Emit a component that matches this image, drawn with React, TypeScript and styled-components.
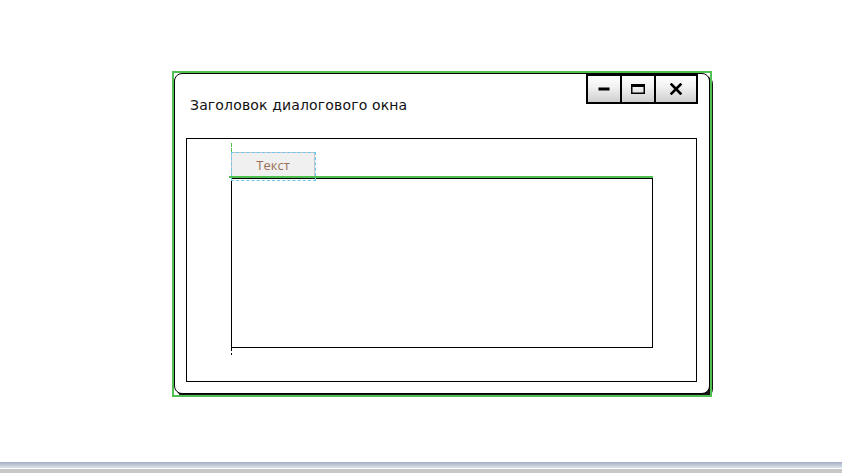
import React from "react";
import styled, { createGlobalStyle } from "styled-components";

const Global = createGlobalStyle`
  html, body { margin: 0; padding: 0; background: #fff; overflow: hidden; }
  * { box-sizing: border-box; }
`;

const Page = styled.div`
  width: 842px;
  height: 473px;
  display: flex;
  flex-direction: column;
  font-family: "DejaVu Sans", "Liberation Sans", sans-serif;
`;

const Canvas = styled.div`
  height: 462px;
  padding: 73px 0 0 174px;
`;

const Dialog = styled.div`
  position: relative;
  width: 536px;
  height: 321px;
  border: 1px solid #000;
  border-radius: 8px;
  background: #fff;
  box-shadow: 3px 3px 0 #151515;
  display: flex;
  flex-direction: column;
`;

const Selection = styled.div`
  position: absolute;
  left: -3px;
  top: -3px;
  width: 540px;
  height: 326px;
  border: 2px solid #4fbf4f;
  pointer-events: none;
`;

const Header = styled.div`
  height: 64px;
  display: flex;
  justify-content: space-between;
  align-items: flex-start;
  padding-right: 11px;
`;

const Title = styled.div`
  padding: 22px 0 0 15px;
  font-size: 14px;
  letter-spacing: 0.15px;
  line-height: 18px;
  color: #111;
`;

const ButtonGroup = styled.div`
  display: flex;
  border: 2px solid #000;
  height: 30px;
`;

const WinButton = styled.div<{ $w: number; $first?: boolean }>`
  width: ${(p) => p.$w + (p.$first ? 0 : 2)}px;
  height: 100%;
  border-left: ${(p) => (p.$first ? "none" : "2px solid #000")};
  background: linear-gradient(to bottom, #ffffff 0%, #f2f2f2 40%, #cfcfcf 100%);
  display: flex;
  align-items: center;
  justify-content: center;
`;

const Frame = styled.div`
  position: relative;
  margin: 0 12px 11px 11px;
  flex: 1;
  border: 1px solid #000;
  padding: 13px 0 0 44px;
`;

const GuideLine = styled.div`
  position: absolute;
  left: 44px;
  top: 4px;
  width: 1px;
  height: 212px;
  background: repeating-linear-gradient(to bottom, #000 0 3px, transparent 3px 5px);
`;

const GuideGreen = styled.div`
  position: absolute;
  left: 44px;
  top: 4px;
  width: 1px;
  height: 9px;
  background: repeating-linear-gradient(to bottom, #4fbf4f 0 4px, transparent 4px 5px);
`;

const TabStrip = styled.div`
  position: relative;
  display: flex;
  flex-direction: column;
`;

const Tab = styled.div`
  width: 84px;
  height: 24px;
  background: #f0f0f0;
  border: 1px solid #c6c6c6;
  border-bottom: none;
  display: flex;
  align-items: center;
  justify-content: center;
  font-size: 13px;
  color: #9a7055;
  font-family: "Open Sans", "DejaVu Sans", sans-serif;
`;

const TabLine = styled.div`
  margin-left: -2px;
  width: 424px;
  height: 2px;
  background: #4fbf4f;
`;

const TabSelection = styled.div`
  position: absolute;
  left: 0;
  top: 0;
  width: 85px;
  height: 29px;
  border: 1px dashed #6cc6ee;
  pointer-events: none;
`;

const Panel = styled.div`
  width: 422px;
  height: 170px;
  border: 1px solid #000;
  background: #fff;
`;

const BottomBar = styled.div`
  height: 11px;
  display: flex;
  flex-direction: column;
`;

const BarGradient = styled.div`
  height: 6px;
  background: linear-gradient(to bottom, #a4afc4, #dde2eb);
`;

const BarGap = styled.div`
  height: 1px;
  background: #fff;
`;

const BarGray = styled.div`
  flex: 1;
  background: #c8c8c8;
`;

export default function App() {
  return (
    <Page>
      <Global />
      <Canvas>
        <Dialog>
          <Header>
            <Title>Заголовок диалогового окна</Title>
            <ButtonGroup>
              <WinButton $w={32} $first>
                <svg width="12" height="4" viewBox="0 0 12 4">
                  <rect x="0.5" y="0.5" width="11" height="3" fill="#000" />
                </svg>
              </WinButton>
              <WinButton $w={32}>
                <svg width="14" height="10" viewBox="0 0 14 10">
                  <rect x="0.75" y="0.75" width="12.5" height="8.5" fill="none" stroke="#000" strokeWidth="1.5" />
                  <rect x="0" y="0" width="14" height="3" fill="#000" />
                </svg>
              </WinButton>
              <WinButton $w={40}>
                <svg width="12" height="12" viewBox="0 0 12 12">
                  <path d="M1.5 1.5 L10.5 10.5 M10.5 1.5 L1.5 10.5" stroke="#000" strokeWidth="2.6" strokeLinecap="square" />
                </svg>
              </WinButton>
            </ButtonGroup>
          </Header>
          <Frame>
            <GuideLine />
            <GuideGreen />
            <TabStrip>
              <Tab>Текст</Tab>
              <TabLine />
              <TabSelection />
            </TabStrip>
            <Panel />
          </Frame>
          <Selection />
        </Dialog>
      </Canvas>
      <BottomBar>
        <BarGradient />
        <BarGap />
        <BarGray />
      </BottomBar>
    </Page>
  );
}
